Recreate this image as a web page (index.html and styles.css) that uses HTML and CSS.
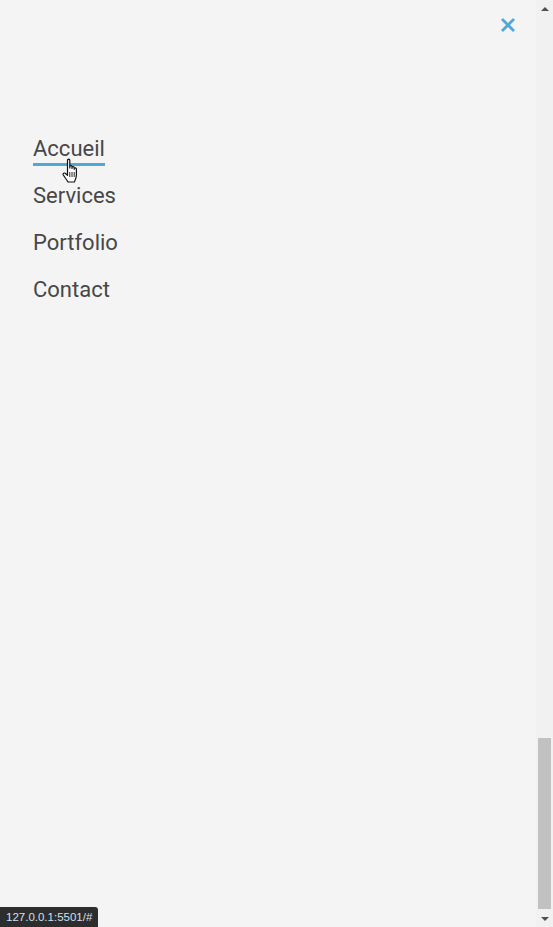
FILE: index.html
```html
<!DOCTYPE html>
<html lang="fr">
<head>
<meta charset="utf-8">
<title>Menu</title>
<link rel="stylesheet" href="styles.css">
</head>
<body>
<div class="frame">
  <main class="menu">
    <div class="menu-top">
      <button class="close" aria-label="Fermer">
        <svg width="16" height="16" viewBox="0 0 16 16"><path d="M2 2 L14 14 M14 2 L2 14" stroke="#4fa8d8" stroke-width="2.8" stroke-linecap="butt" fill="none"/></svg>
      </button>
    </div>
    <nav>
      <ul class="nav-list">
        <li><a href="#" class="nav-link active">Accueil</a></li>
        <li><a href="#" class="nav-link">Services</a></li>
        <li><a href="#" class="nav-link">Portfolio</a></li>
        <li><a href="#" class="nav-link">Contact</a></li>
      </ul>
    </nav>
  </main>
  <div class="scrollbar">
    <div class="sb-btn"><span class="tri-up"></span></div>
    <div class="sb-track"><div class="sb-thumb"></div></div>
    <div class="sb-btn"><span class="tri-down"></span></div>
  </div>
</div>
<svg class="cursor" width="18" height="26" viewBox="0 0 18 26">
  <path d="M5.5 2.2 C5.5 0.8 7.8 0.8 7.8 2.2 L7.8 10 L7.8 8.6 C7.8 7.3 10 7.3 10 8.6 L10 10.5 L10 9.6 C10 8.3 12.2 8.3 12.2 9.6 L12.2 11.3 L12.2 10.8 C12.2 9.5 14.4 9.5 14.4 10.8 L14.4 17 C14.4 20 13.4 22 12.4 24 L6 24 C5 22 2 18.5 1.2 16.8 C0.6 15.4 2.3 14.4 3.5 15.5 L5.5 17.4 Z" fill="#fff" stroke="#111" stroke-width="1.2" stroke-linejoin="round"/>
  <path d="M7.8 14 L7.8 19 M10 14 L10 19 M12.2 14 L12.2 19" stroke="#111" stroke-width="0.9"/>
</svg>
<div class="status">127.0.0.1:5501/#</div>
</body>
</html>
```
FILE: styles.css
```css
html, body {
  margin: 0;
  padding: 0;
  height: 100%;
  overflow: hidden;
}
body {
  background: #f4f4f4;
  font-family: Roboto, "Liberation Sans", sans-serif;
  color: #484848;
}
.frame {
  display: flex;
  height: 927px;
}
.menu {
  flex: 1;
  padding: 0 20px 0 33px;
}
.menu-top {
  display: flex;
  justify-content: flex-end;
  padding-top: 17px;
  height: 136px;
  box-sizing: border-box;
}
.close {
  background: none;
  border: 0;
  padding: 0;
  width: 16px;
  height: 16px;
  cursor: pointer;
}
.close svg { display: block; }
.nav-list {
  list-style: none;
  margin: 0;
  padding: 0;
  display: flex;
  flex-direction: column;
  align-items: flex-start;
  gap: 17px;
}
.nav-link {
  display: inline-block;
  font-size: 22px;
  line-height: 26px;
  padding-bottom: 1px;
  border-bottom: 3px solid transparent;
  color: #474747;
  text-decoration: none;
}
.nav-link.active {
  border-bottom-color: #4ea9d6;
}
.scrollbar {
  width: 17px;
  background: #f1f1f1;
  display: flex;
  flex-direction: column;
}
.sb-btn {
  height: 17px;
  display: flex;
  align-items: center;
  justify-content: center;
}
.tri-up, .tri-down {
  width: 0;
  height: 0;
  border-left: 4px solid transparent;
  border-right: 4px solid transparent;
}
.tri-up { border-bottom: 4px solid #505050; }
.tri-down { border-top: 4px solid #505050; }
.sb-track {
  flex: 1;
  display: flex;
  flex-direction: column;
  justify-content: flex-end;
  padding: 0 2px 1px 2px;
}
.sb-thumb {
  height: 171px;
  background: #c1c1c1;
}
.cursor {
  position: absolute;
  left: 62px;
  top: 158px;
}
.status {
  position: fixed;
  left: 0;
  bottom: 0;
  height: 20px;
  line-height: 20px;
  padding: 0 6px;
  background: #2d2d2d;
  color: #cfe0ee;
  font-family: "Liberation Sans", sans-serif;
  font-size: 11.5px;
  border-top-right-radius: 3px;
}
```
